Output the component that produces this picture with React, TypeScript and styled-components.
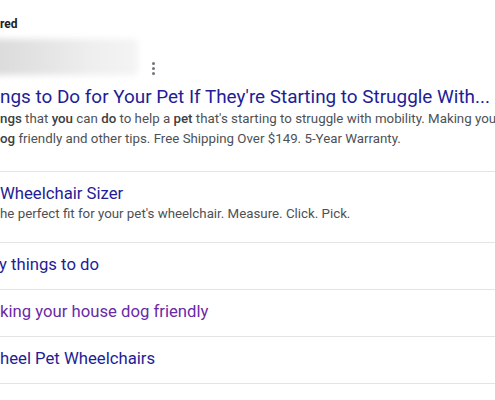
import React from 'react';
import styled, { createGlobalStyle } from 'styled-components';

const GlobalStyle = createGlobalStyle`
  html, body {
    margin: 0;
    padding: 0;
    background: #ffffff;
  }
  body {
    font-family: Roboto, "Liberation Sans", Arial, sans-serif;
    -webkit-font-smoothing: antialiased;
  }
`;

// Layout
const AdCard = styled.div`
  width: 495px;
  height: 400px;
  overflow: hidden;
  background: #ffffff;
`;

const SponsoredLabel = styled.div`
  padding-top: 16px;
  font-size: 12px;
  line-height: 16px;
  font-weight: 700;
  color: #202124;
`;

const UrlRow = styled.div`
  display: flex;
  align-items: flex-end;
  margin-top: 5px;
  height: 40px;
`;

const BlurredUrl = styled.div`
  width: 146px;
  height: 36px;
  margin-left: -8px;
  margin-bottom: 2px;
  border-radius: 4px;
  background: linear-gradient(90deg, #dadada 0%, #e4e4e4 35%, #efefef 70%, #f4f4f4 100%);
  filter: blur(3px);
`;

const MenuDots = styled.div`
  display: flex;
  flex-direction: column;
  gap: 2px;
  margin-left: 14px;
  margin-bottom: 2px;
`;

const Dot = styled.span`
  width: 3px;
  height: 3px;
  border-radius: 50%;
  background: #70757a;
`;

const Title = styled.div`
  margin-top: 8px;
  font-size: 18.9px;
  line-height: 24px;
  color: #221d96;
  white-space: nowrap;
`;

const Description = styled.div`
  font-size: 13.3px;
  line-height: 20px;
  color: #4d5156;
`;

const DescLine = styled.div`
  white-space: nowrap;

  b {
    font-weight: 500;
    color: #3c4043;
  }
`;

const Sitelinks = styled.div`
  margin-top: 22px;
  border-top: 1px solid #e4e4e4;
`;

const Sitelink = styled.div<{ $tall?: boolean }>`
  padding: 12px 0 ${({ $tall }) => ($tall ? '18px' : '14px')};
  border-bottom: 1px solid #e4e4e4;
`;

const SitelinkTitle = styled.div<{ $visited?: boolean; $shift?: number }>`
  font-size: 16.7px;
  line-height: 20px;
  color: ${({ $visited }) => ($visited ? '#6a2aa6' : '#221d96')};
  margin-left: ${({ $shift }) => ($shift ? `${$shift}px` : '0')};
  white-space: nowrap;
`;

const SitelinkDesc = styled.div`
  font-size: 13.3px;
  line-height: 20px;
  color: #4d5156;
  white-space: nowrap;
`;

const sitelinks = [
  { title: 'Wheelchair Sizer', desc: "he perfect fit for your pet's wheelchair. Measure. Click. Pick." },
  { title: 'y things to do', shift: -1 },
  { title: 'king your house dog friendly', visited: true },
  { title: 'heel Pet Wheelchairs' },
];

export default function App() {
  return (
    <>
      <GlobalStyle />
      <AdCard>
        <SponsoredLabel>red</SponsoredLabel>
        <UrlRow>
          <BlurredUrl />
          <MenuDots>
            <Dot />
            <Dot />
            <Dot />
          </MenuDots>
        </UrlRow>
        <Title>ngs to Do for Your Pet If They're Starting to Struggle With...</Title>
        <Description>
          <DescLine>
            <b>ngs</b> that <b>you</b> can <b>do</b> to help a <b>pet</b> that's starting to struggle with mobility. Making your
          </DescLine>
          <DescLine>
            <b>og</b> friendly and other tips. Free Shipping Over $149. 5-Year Warranty.
          </DescLine>
        </Description>
        <Sitelinks>
          {sitelinks.map((s) => (
            <Sitelink key={s.title} $tall={!!s.desc}>
              <SitelinkTitle $visited={s.visited} $shift={s.shift}>
                {s.title}
              </SitelinkTitle>
              {s.desc && <SitelinkDesc>{s.desc}</SitelinkDesc>}
            </Sitelink>
          ))}
        </Sitelinks>
      </AdCard>
    </>
  );
}
